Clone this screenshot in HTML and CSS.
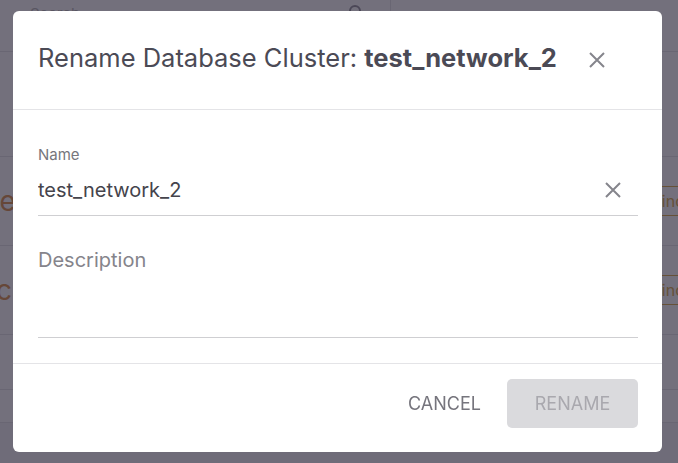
FILE: index.html
```html
<!DOCTYPE html>
<html lang="en">
<head>
    <meta charset="UTF-8">
    <meta name="viewport" content="width=device-width, initial-scale=1.0">
    <title>Rename Database Cluster</title>
    <link rel="stylesheet" href="styles.css">
</head>
<body>

    <!-- page behind the dialog -->
    <div class="page">
        <div class="topbar">
            <div class="search">
                <span class="search-text">Search...</span>
                <svg class="search-icon" width="16" height="16" viewBox="0 0 16 16">
                    <circle cx="7" cy="7" r="5" fill="none" stroke="#8d8b95" stroke-width="2"/>
                    <line x1="11" y1="11" x2="15" y2="15" stroke="#8d8b95" stroke-width="2"/>
                </svg>
            </div>
        </div>
        <div class="subbar"></div>
        <div class="row">
            <span class="row-name">net</span>
            <span class="row-btn">Find</span>
        </div>
        <div class="row">
            <span class="row-name">ca</span>
            <span class="row-btn">Find</span>
        </div>
        <div class="row small"></div>
        <div class="row tiny"></div>
        <div class="page-foot"></div>
    </div>

    <div class="overlay">
        <div class="dialog">
            <div class="dialog-header">
                <h2 class="dialog-title">Rename Database Cluster: <b>test_network_2</b></h2>
                <button class="icon-btn" type="button" aria-label="Close">
                    <svg width="16" height="16" viewBox="0 0 16 16">
                        <path d="M1 1 L15 15 M15 1 L1 15" stroke="#85858c" stroke-width="2" fill="none"/>
                    </svg>
                </button>
            </div>

            <div class="dialog-body">
                <div class="field">
                    <label class="field-label" for="nameInput">Name</label>
                    <div class="field-line">
                        <input class="field-input" id="nameInput" type="text" value="test_network_2">
                        <button class="icon-btn clear-btn" type="button" aria-label="Clear">
                            <svg width="18" height="18" viewBox="0 0 18 18">
                                <path d="M2 2 L16 16 M16 2 L2 16" stroke="#85858c" stroke-width="2" fill="none"/>
                            </svg>
                        </button>
                    </div>
                </div>

                <div class="field area">
                    <textarea class="field-input textarea" placeholder="Description"></textarea>
                </div>
            </div>

            <div class="dialog-footer">
                <button class="btn btn-text" type="button">Cancel</button>
                <button class="btn btn-primary" type="button" disabled>Rename</button>
            </div>
        </div>
    </div>

</body>
</html>
```

FILE: styles.css
```css
* {
    box-sizing: border-box;
}
body {
    margin: 0;
    font-family: 'Inter', 'Noto Sans', sans-serif;
    background: #fff;
    height: 463px;
    overflow: hidden;
}

/* background page */
.page {
    height: 100%;
    background: #fff;
    display: flex;
    flex-direction: column;
}
.topbar {
    height: 52px;
    border-bottom: 1px solid #e2e2e6;
    display: flex;
}
.search {
    width: 391px;
    border-right: 1px solid #e2e2e6;
    display: flex;
    justify-content: space-between;
    padding: 4px 26px 0 30px;
}
.search-text {
    color: #b5b5b5;
    font-size: 15px;
}
.subbar {
    height: 105px;
    border-bottom: 1px solid #e2e2e6;
}
.row {
    height: 89px;
    display: flex;
    justify-content: space-between;
    align-items: center;
    border-bottom: 1px solid #e2e2e6;
}
.row-name {
    color: #d98a3e;
    font-size: 28px;
    margin-left: -17px;
}
.row:nth-child(4) .row-name {
    margin-left: -4px;
}
.row-btn {
    color: #d9a63e;
    border: 1px solid #d9a63e;
    height: 30px;
    line-height: 28px;
    padding: 0 20px 0 2px;
    margin-right: -28px;
    font-size: 16px;
}
.row.small {
    height: 55px;
}
.row.tiny {
    height: 33px;
}
.page-foot {
    flex: 1;
    background: #f3f3f5;
}

/* modal */
.overlay {
    position: fixed;
    inset: 0;
    background: rgba(40, 36, 54, 0.65);
    padding: 11px 16px 11px 13px;
}
.dialog {
    background: #fff;
    border-radius: 6px;
    height: 441px;
    display: flex;
    flex-direction: column;
}
.dialog-header {
    height: 99px;
    border-bottom: 1px solid #e4e4e7;
    display: flex;
    align-items: center;
    padding: 0 40px 6px 25px;
    gap: 32px;
}
.dialog-title {
    margin: 0;
    font-weight: normal;
    font-size: 25.5px;
    color: #4b4a55;
}
.dialog-title b {
    font-weight: 700;
}
.icon-btn {
    background: none;
    border: none;
    padding: 0;
    cursor: pointer;
    display: flex;
}
.dialog-header .icon-btn {
    margin-top: 6px;
}

.dialog-body {
    flex: 1;
    padding: 36px 24px 0 25px;
    border-bottom: 1px solid #e4e4e7;
}
.field-label {
    display: block;
    font-size: 15px;
    line-height: 18px;
    color: #76767c;
    margin-bottom: 14px;
}
.field-line {
    display: flex;
    align-items: center;
    border-bottom: 1px solid #cfcfd2;
    padding-bottom: 13px;
}
.field-input {
    flex: 1;
    border: none;
    outline: none;
    font-family: inherit;
    font-size: 20px;
    line-height: 24px;
    color: #45444c;
    padding: 0;
    background: none;
}
.clear-btn {
    margin-right: 16px;
}
.field.area {
    margin-top: 32px;
    border-bottom: 1px solid #cfcfd2;
}
.textarea {
    display: block;
    width: 100%;
    height: 89px;
    resize: none;
}
.textarea::placeholder {
    color: #85848b;
}

.dialog-footer {
    height: 88px;
    display: flex;
    justify-content: flex-end;
    align-items: flex-start;
    padding: 15px 24px 0 0;
    gap: 26px;
}
.btn {
    font-family: inherit;
    font-size: 18px;
    text-transform: uppercase;
    border: none;
    border-radius: 5px;
    height: 49px;
    cursor: pointer;
}
.btn-text {
    background: none;
    color: #76757d;
    padding: 0;
}
.btn-primary {
    width: 131px;
    background: #dadadd;
    color: #a9a8ae;
}
```
